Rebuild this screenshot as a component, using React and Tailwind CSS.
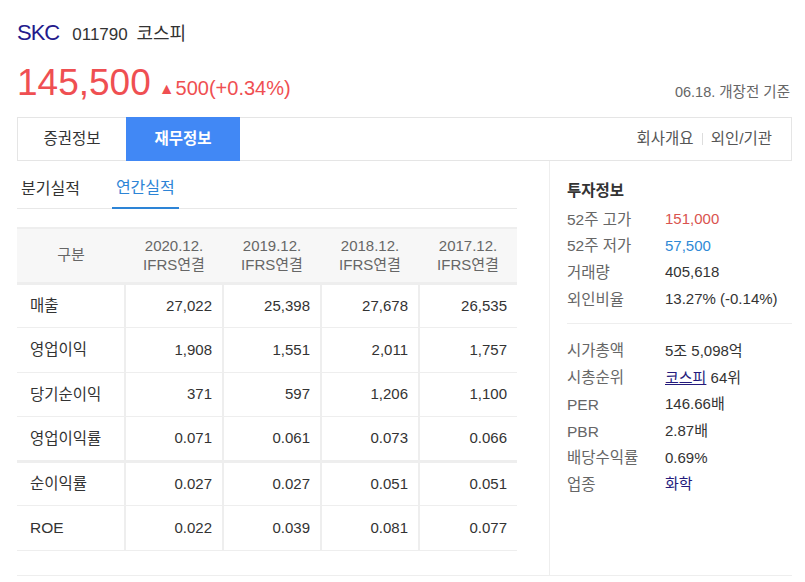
import React from 'react';

const font = { fontFamily: '"Liberation Sans", "Noto Sans CJK KR", sans-serif' };

const years = ['2020.12.', '2019.12.', '2018.12.', '2017.12.'];

const rows = [
  { name: '매출', values: ['27,022', '25,398', '27,678', '26,535'] },
  { name: '영업이익', values: ['1,908', '1,551', '2,011', '1,757'] },
  { name: '당기순이익', values: ['371', '597', '1,206', '1,100'] },
  { name: '영업이익률', values: ['0.071', '0.061', '0.073', '0.066'], thick: true },
  { name: '순이익률', values: ['0.027', '0.027', '0.051', '0.051'] },
  { name: 'ROE', values: ['0.022', '0.039', '0.081', '0.077'] },
];

function InfoRow({ label, children }) {
  return (
    <div className="flex items-center h-[26.7px]">
      <span className="w-[98px] text-[#666] text-[15.5px]">{label}</span>
      <span className="text-[#333]">{children}</span>
    </div>
  );
}

export default function App() {
  return (
    <div className="bg-white w-[805px] h-[582px] overflow-hidden text-[15px]" style={font}>
      <div className="w-[775px] ml-[17px]">
        {/* title */}
        <div className="flex items-baseline gap-[13px] pt-[16px] h-[48px]">
          <span className="text-[22px] text-[#241a8c] tracking-[-1px]">SKC</span>
          <span className="text-[17px] text-[#333]">
            011790 <span className="text-[18px] ml-[4px]">코스피</span>
          </span>
        </div>

        {/* price */}
        <div className="flex items-end justify-between h-[53px]">
          <div className="flex items-baseline gap-[8px]">
            <span className="text-[37px] leading-none text-[#ef4f52]">145,500</span>
            <span className="text-[20px] text-[#ef4f52] leading-none">
              <span className="text-[16px] relative -top-[1px] mr-[1px]">▲</span>500(+0.34%)
            </span>
          </div>
          <span className="text-[14.5px] text-[#666] mr-[2px] -mb-[3px]">06.18. 개장전 기준</span>
        </div>

        {/* tabs */}
        <div className="mt-[16px] h-[44px] border border-[#e5e5e5] flex items-stretch">
          <div className="w-[108px] flex items-center justify-center text-[15.5px] text-[#333]">증권정보</div>
          <div className="w-[114px] -my-px flex items-center justify-center text-[15.5px] font-bold text-white bg-[#4188f5]">재무정보</div>
          <div className="flex-1 flex items-center justify-end pr-[19px] text-[15.5px] text-[#555]">
            회사개요
            <span className="mx-[8px] h-[12px] w-px bg-[#ddd]"></span>
            외인/기관
          </div>
        </div>

        {/* main */}
        <div className="flex border-b border-[#eee] h-[415px]">
          <div className="w-[500px]">
            <div className="flex h-[48px] pt-[8px] border-b border-[#e8e8e8] items-stretch">
              <div className="flex items-center pl-[4px] pr-[32px] text-[#333] text-[16px]">분기실적</div>
              <div className="flex items-center px-[4px] text-[16px] text-[#2d84d6] border-b-2 border-[#2d84d6] -mb-px">연간실적</div>
            </div>

            <table className="mt-[18px] border-collapse w-[500px] table-fixed">
              <thead>
                <tr className="bg-[#f7f7f7] border-t-2 border-b-[3px] border-[#eee] h-[55px] text-[#666]">
                  <th className="w-[108px] font-normal text-center">구분</th>
                  {years.map((y) => (
                    <th key={y} className="font-normal text-center leading-[19px]">
                      {y}
                      <br />
                      IFRS연결
                    </th>
                  ))}
                </tr>
              </thead>
              <tbody>
                {rows.map((r) => (
                  <tr
                    key={r.name}
                    className={`h-[44.5px] border-[#eee] ${r.thick ? 'border-b-[3px]' : 'border-b'}`}
                  >
                    <td className="pl-[13px] text-[#333] text-[15.5px]">{r.name}</td>
                    {r.values.map((v, i) => (
                      <td key={i} className="text-right pr-[10px] text-[#333] border-l-2 border-[#eee]">
                        {v}
                      </td>
                    ))}
                  </tr>
                ))}
              </tbody>
            </table>
          </div>

          <div className="ml-[32px] flex-1 border-l border-[#eee] pl-[17px] pt-[2px]">
            <div className="pt-[16px] h-[43px] text-[15.5px] font-bold text-[#333]">투자정보</div>
            <InfoRow label="52주 고가">
              <span className="text-[#d9534f]">151,000</span>
            </InfoRow>
            <InfoRow label="52주 저가">
              <span className="text-[#2f8ad6]">57,500</span>
            </InfoRow>
            <InfoRow label="거래량">405,618</InfoRow>
            <InfoRow label="외인비율">13.27% (-0.14%)</InfoRow>
            <div className="mt-[10px] mb-[14px] border-t border-[#eee]"></div>
            <InfoRow label="시가총액">5조 5,098억</InfoRow>
            <InfoRow label="시총순위">
              <span className="text-[#241a7c] underline">코스피</span> 64위
            </InfoRow>
            <InfoRow label="PER">146.66배</InfoRow>
            <InfoRow label="PBR">2.87배</InfoRow>
            <InfoRow label="배당수익률">0.69%</InfoRow>
            <InfoRow label="업종">
              <span className="text-[#241a7c]">화학</span>
            </InfoRow>
          </div>
        </div>
      </div>
    </div>
  );
}
